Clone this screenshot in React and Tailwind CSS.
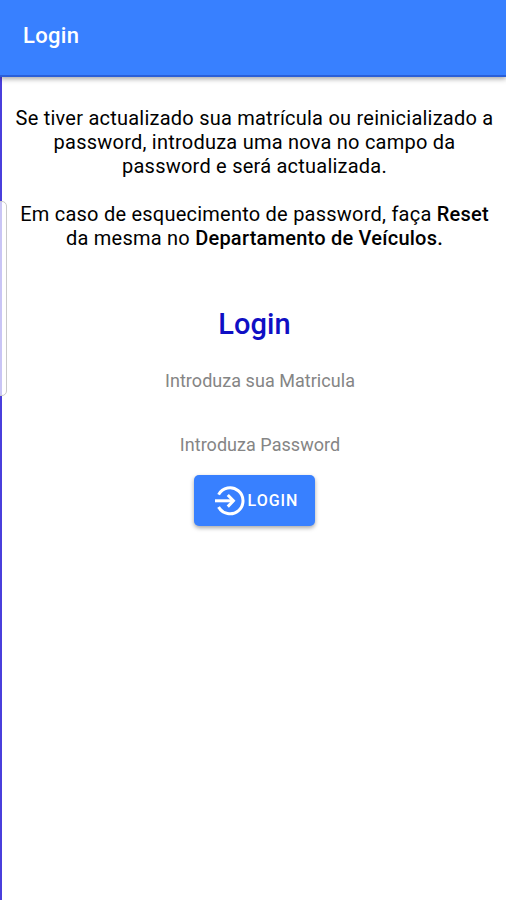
import React from 'react';

const EnterIcon = ({ className }) => (
  <svg
    className={className}
    viewBox="0 0 32 32"
    fill="none"
    stroke="currentColor"
    strokeWidth="3"
  >
    <path d="M4.6 9.6A13 13 0 1 1 4.6 22" />
    <path d="M1 15.8h18.4" />
    <path d="M13.8 10 19.4 15.8l-5.6 5.8" />
  </svg>
);

const Header = () => (
  <header className="relative z-10 flex h-[77px] shrink-0 items-center border-b-2 border-[#2a5fd8] bg-[#3880ff] pl-[23px] pb-[3px] shadow-[0_2px_5px_rgba(0,0,0,0.35)]">
    <h1 className="text-[22px] leading-6 font-medium tracking-[0.3px] text-white">Login</h1>
  </header>
);

const Notice = () => (
  <div className="mt-[29px] pl-px text-center text-[20px] leading-6 tracking-[0.23px] whitespace-nowrap text-black">
    <p>
      Se tiver actualizado sua matrícula ou reinicializado a
      <br />
      password, introduza uma nova no campo da
      <br />
      password e será actualizada.
    </p>
    <p className="mt-6">
      Em caso de esquecimento de password, faça <b className="font-medium">Reset</b>
      <br />
      da mesma no <b className="font-medium">Departamento de Veículos.</b>
    </p>
  </div>
);

const inputClass =
  'block w-full bg-transparent pl-[11px] text-center text-[18px] leading-6 tracking-[0.04px] text-[#333333] placeholder:text-[#858585] outline-none';

const LoginForm = () => (
  <form className="mt-[56px] flex flex-col items-center pl-px" onSubmit={(e) => e.preventDefault()}>
    <h2 className="text-[29px] leading-9 font-medium tracking-[0.1px] text-[#0f0fc4]">Login</h2>
    <input className={`${inputClass} mt-[27px]`} type="text" placeholder="Introduza sua Matricula" />
    <input className={`${inputClass} mt-10`} type="password" placeholder="Introduza Password" />
    <button
      type="submit"
      className="mt-[18px] flex h-[51px] w-[121px] items-center justify-center rounded-[5px] bg-[#3880ff] pl-[3px] text-[16px] font-medium tracking-[1px] text-white shadow-[0_2px_4px_rgba(0,0,0,0.35)]"
    >
      <EnterIcon className="mr-0.5 h-8 w-8" />
      LOGIN
    </button>
  </form>
);

export default function App() {
  return (
    <div className="relative flex h-[900px] w-[506px] flex-col overflow-hidden bg-white font-['Roboto',sans-serif]">
      <Header />
      <main className="flex-1 border-l-2 border-[#4a3fdc]">
        <Notice />
        <LoginForm />
      </main>
      {/* edge panel handle */}
      <div className="absolute top-[201px] left-[-4px] h-[195px] w-[11px] rounded-r-[5px] border border-[#c9c9c9] bg-white/70" />
    </div>
  );
}
